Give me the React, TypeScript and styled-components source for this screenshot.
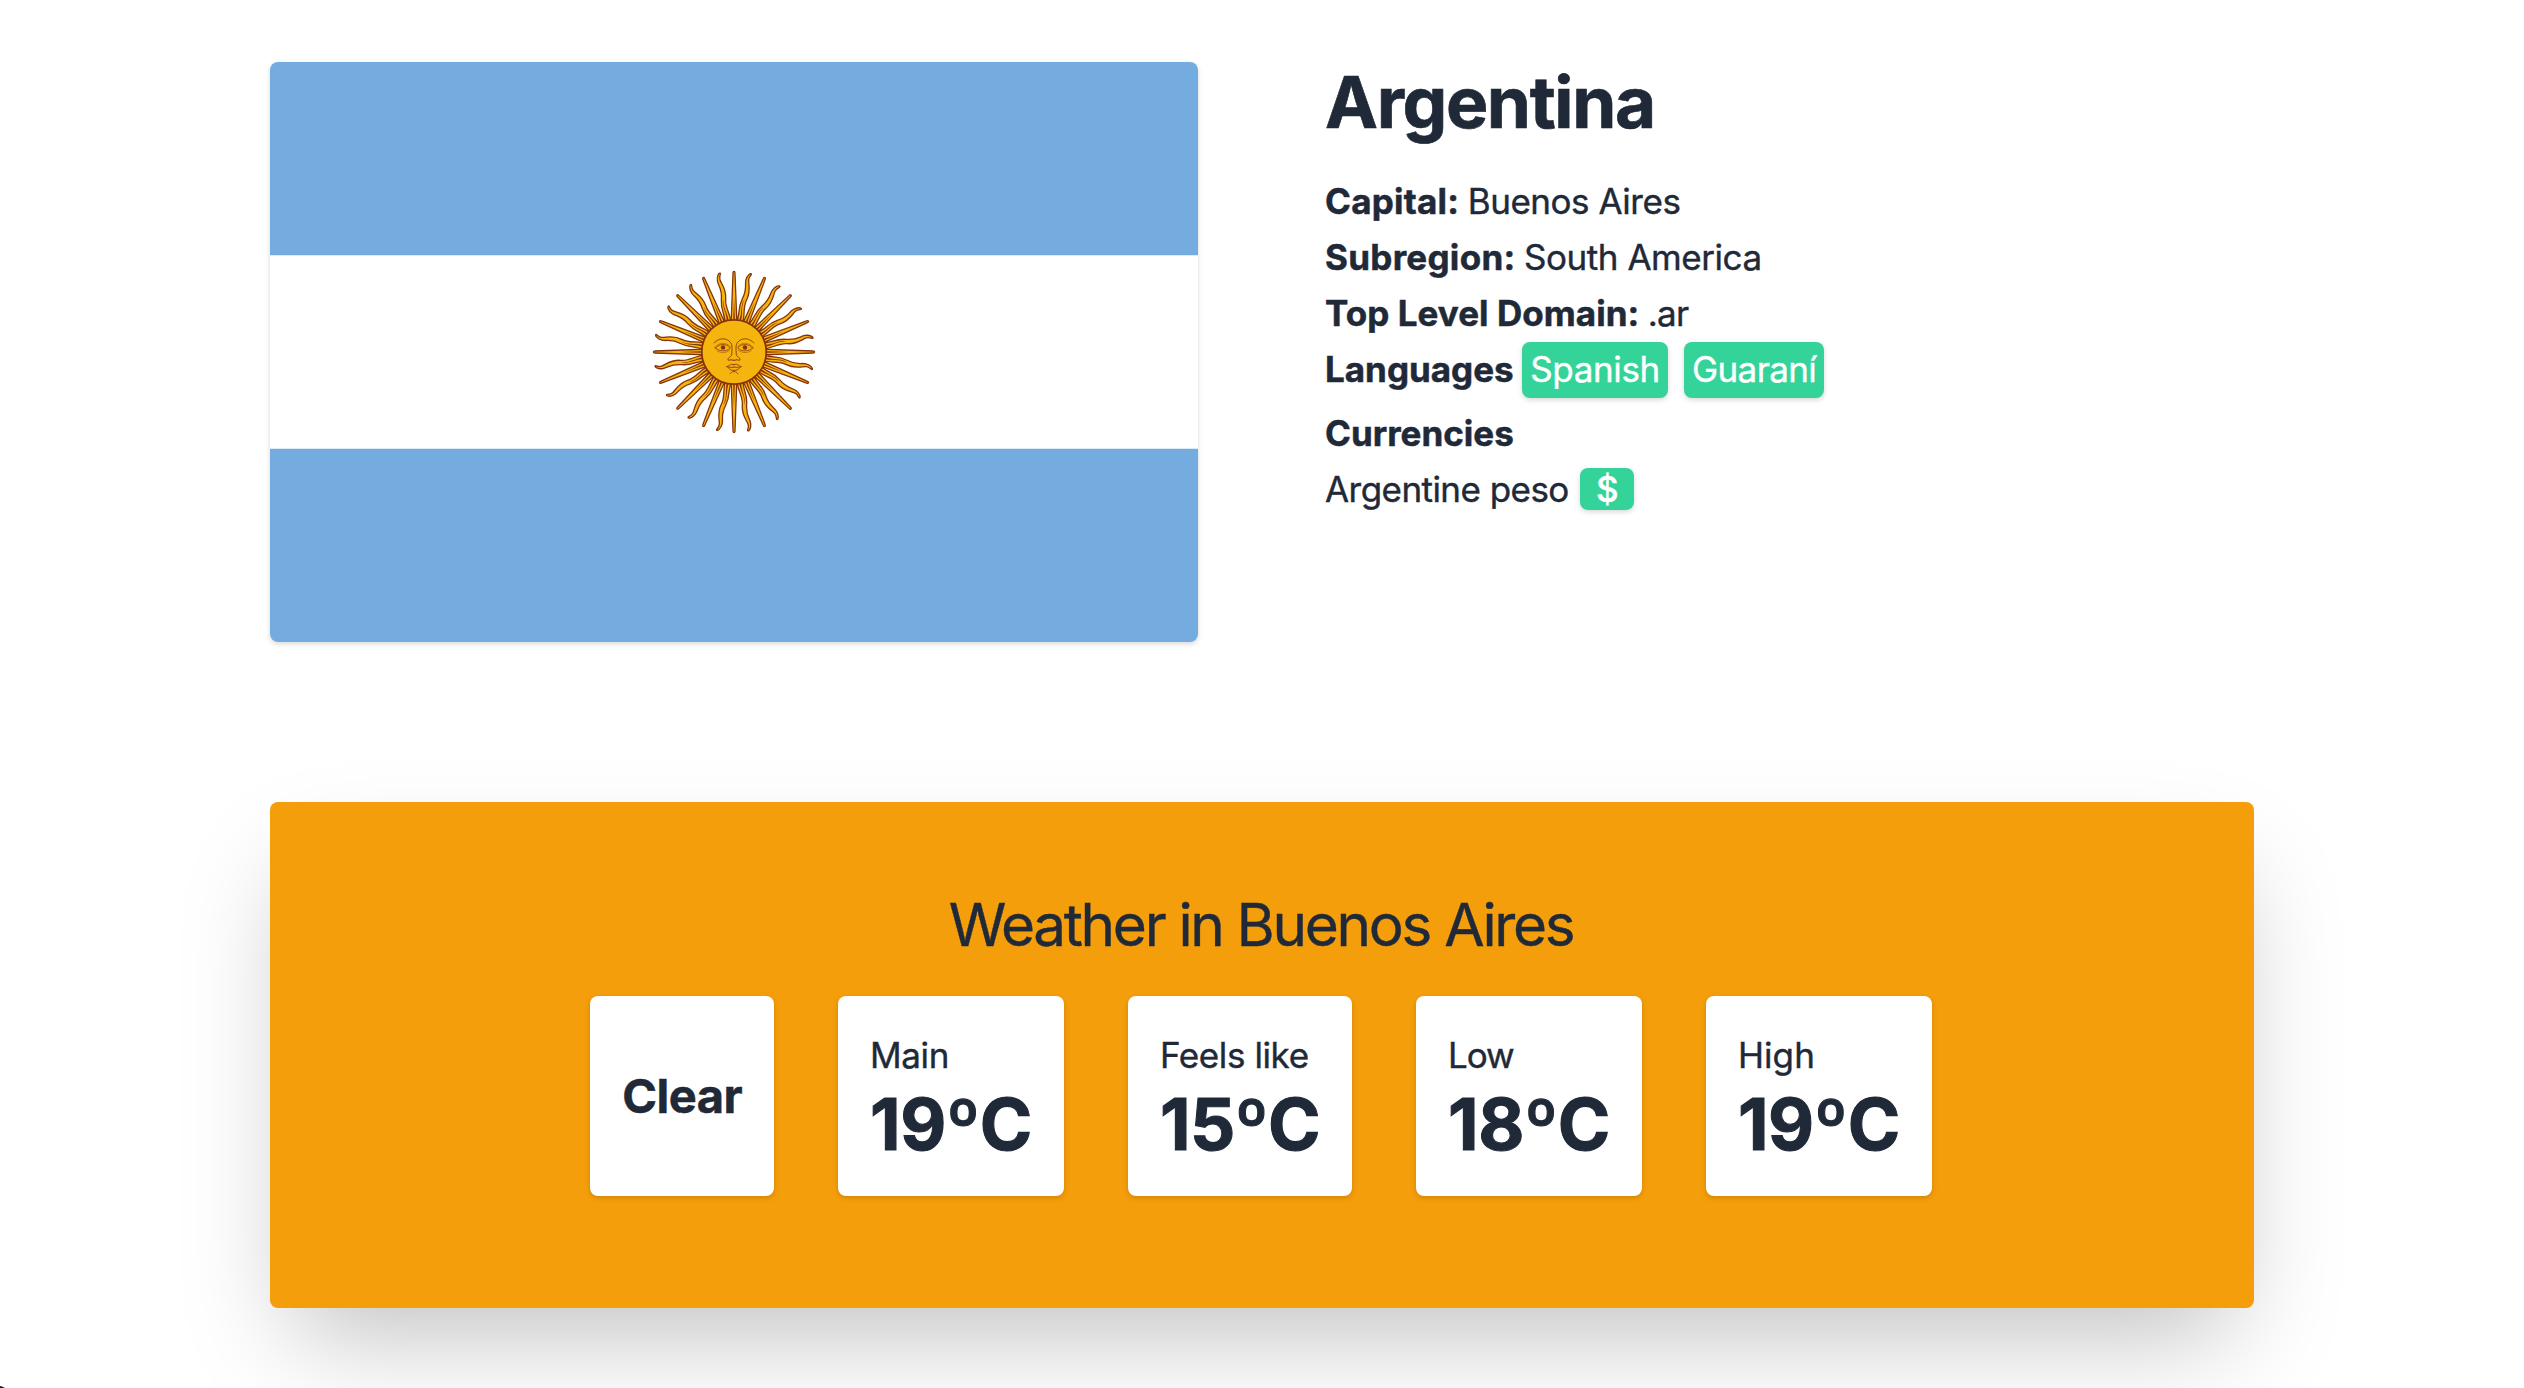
import React from 'react';
import styled, { createGlobalStyle } from 'styled-components';

const GlobalStyle = createGlobalStyle`
  *, *::before, *::after { box-sizing: border-box; }
  html, body { margin: 0; background: #fff; overflow: hidden; }
  body {
    font-family: Inter, "Liberation Sans", sans-serif;
    font-size: 35px;
    line-height: 56px;
    color: #1f2937;
    -webkit-font-smoothing: antialiased;
    -webkit-text-stroke: 0.4px currentColor;
  }
  h1, h2, p { margin: 0; }
`;

const cardShadow = '0 2px 6px rgba(0, 0, 0, 0.1), 0 2px 4px rgba(0, 0, 0, 0.06)';

const Page = styled.main`
  position: relative;
  height: 1388px;
  padding: 62px 270px 0;
  overflow: hidden;
`;

const Overview = styled.section`
  display: flex;
  align-items: flex-start;
  gap: 127px;
`;

const FlagFrame = styled.div`
  flex: none;
  width: 928px;
  height: 580px;
  border-radius: 8px;
  overflow: hidden;
  box-shadow: ${cardShadow};

  svg { display: block; width: 100%; height: 100%; }
`;

const Facts = styled.div`
  display: flex;
  flex-direction: column;
`;

const CountryName = styled.h1`
  margin-bottom: 32px;
  font-size: 71px;
  line-height: 80px;
  font-weight: 700;
  letter-spacing: -1.38px;
  -webkit-text-stroke-width: 0.7px;
`;

const Fact = styled.div<{ $gap?: number; $after?: number }>`
  display: flex;
  align-items: center;
  gap: ${p => p.$gap ?? 8.5}px;
  height: 56px;
  margin-bottom: ${p => p.$after ?? 0}px;
  white-space: nowrap;
`;

const Text = styled.span<{ $track?: number }>`
  padding-bottom: 2px;
  line-height: 54px;
  letter-spacing: ${p => p.$track ?? 0}px;
`;

const Label = styled(Text)`
  font-weight: 700;
  -webkit-text-stroke-width: 0.5px;
`;

const Tags = styled.div`
  display: flex;
  gap: 16px;
`;

const Tag = styled.span<{ $track: number }>`
  padding: 0 8px 2px;
  border-radius: 8px;
  background: #34d399;
  color: #fff;
  line-height: 54px;
  letter-spacing: ${p => p.$track}px;
  box-shadow: ${cardShadow};
`;

const Symbol = styled.span`
  width: 54px;
  height: 42px;
  margin-bottom: 2px;
  border-radius: 8px;
  background: #34d399;
  color: #fff;
  font-weight: 500;
  line-height: 42px;
  text-align: center;
  box-shadow: ${cardShadow};
`;

const Weather = styled.section`
  display: flex;
  flex-direction: column;
  align-items: center;
  height: 506px;
  margin-top: 160px;
  padding: 87px 2px 0 0;
  border-radius: 8px;
  background: #f59e0b;
  box-shadow: 0 50px 100px -24px rgba(0, 0, 0, 0.25);
`;

const WeatherTitle = styled.h2`
  margin-bottom: 35px;
  font-size: 58.5px;
  line-height: 72px;
  font-weight: 400;
  letter-spacing: -2.34px;
`;

const Readings = styled.div`
  display: flex;
  gap: 64px;
`;

const Reading = styled.div`
  display: flex;
  flex-direction: column;
  justify-content: center;
  height: 200px;
  padding: 0 32px;
  border-radius: 8px;
  background: #fff;
  box-shadow: ${cardShadow};
`;

const Condition = styled.p`
  font-size: 47px;
  line-height: 64px;
  font-weight: 700;
  letter-spacing: -0.5px;
  -webkit-text-stroke-width: 0.5px;
`;

const Degrees = styled.p<{ $track: number }>`
  font-size: 71px;
  line-height: 80px;
  font-weight: 700;
  letter-spacing: ${p => p.$track}px;
  -webkit-text-stroke-width: 1.1px;
`;

const WindowCorner = styled.div`
  position: absolute;
  left: 0;
  bottom: 0;
  width: 5px;
  height: 2px;
  background: #111c26;
  clip-path: polygon(0 0, 40% 30%, 100% 100%, 0 100%);
`;

const turns = Array.from({ length: 16 }, (_, i) => i * 22.5);

function HalfFace() {
  return (
    <g fill="none" stroke="#843511" strokeWidth="0.75" strokeLinecap="round">
      <path d="M382.8 242.2C386.6 238.2 391.6 237.6 395.2 240.1C397.8 241.9 398.5 244.4 398.3 247.4L398 252.4C397.6 253.8 396.4 254.2 395.6 255" />
      <path d="M384 246.6C386.8 242.8 393.6 242.2 396.8 246.6C393.2 250 387.8 249.8 384 246.6Z" strokeWidth="0.65" />
      <path d="M383.4 246.2C387 241.4 393.4 241.2 397 245.6" strokeWidth="0.4" />
      <path d="M385.2 248.8C388.2 251.2 393.2 251.2 396.2 248.4" strokeWidth="0.4" />
      <circle cx="390.54" cy="246.15" r="1.93" fill="#843511" stroke="none" />
      <path d="M400 257.2C398.8 257.6 397.8 256 396.4 257C395.2 257.8 394.4 256.7 395 255.6" strokeWidth="0.85" />
      <path d="M400 261C398.6 260.2 397.4 260.4 396.4 261.2C395.4 262.1 394.4 262.6 393.5 262.6C395.4 263.4 397.6 263.1 400 263.1" />
      <path d="M395 263.5C396.2 265.4 398 265.9 400 265.9" />
      <path d="M396.7 268.8C397.4 267.3 398.6 266.9 400 266.9" strokeWidth="0.65" />
    </g>
  );
}

function ArgentinaFlag() {
  return (
    <svg viewBox="0 0 800 500" role="img" aria-label="Argentina">
      <path fill="#74acdf" d="M0 0h800v500H0z" />
      <path fill="#fff" d="M0 166.67h800v166.67H0z" />
      {turns.map(a => (
        <g key={a} transform={`rotate(${a} 400 250)`}>
          <path
            fill="#f6b40e"
            stroke="#85340a"
            strokeWidth="1.1125"
            d="M396.84 251.31l28.454 61.992s.49 1.185 1.28.859c.79-.327.299-1.512.299-1.512l-23.715-63.956m-.68 24.12c-.347 9.428 5.452 14.613 4.694 23.032-.757 8.42 3.867 13.18 4.94 16.454 1.073 3.274-1.16 5.232-.198 5.698.963.466 3.07-2.121 2.383-6.776-.687-4.655-4.22-6.037-3.39-16.32.83-10.283-4.206-12.678-2.98-22.058"
          />
          <path
            fill="#85340a"
            d="M404.31 274.41c.453 9.054 5.587 13.063 4.579 21.314 2.213-6.525-3.124-11.583-2.82-21.22m-7.649-23.757l19.487 42.577-16.329-43.887"
          />
        </g>
      ))}
      <circle cx="400" cy="250" r="27.778" fill="#f6b40e" stroke="#85340a" strokeWidth="1.5" />
      <HalfFace />
      <g transform="matrix(-1 0 0 1 800 0)">
        <HalfFace />
      </g>
    </svg>
  );
}

const readings = [
  { label: 'Main', value: '19ºC', labelTrack: -0.4, track: -0.4 },
  { label: 'Feels like', value: '15ºC', labelTrack: -0.4, track: -0.7 },
  { label: 'Low', value: '18ºC', labelTrack: -1, track: -0.4 },
  { label: 'High', value: '19ºC', labelTrack: 0.1, track: -0.4 },
];

export default function App() {
  return (
    <Page>
      <GlobalStyle />
      <Overview>
        <FlagFrame><ArgentinaFlag /></FlagFrame>
        <Facts>
          <CountryName>Argentina</CountryName>
          <Fact><Label $track={0.25}>Capital:</Label><Text $track={-0.47}>Buenos Aires</Text></Fact>
          <Fact><Label $track={0.29}>Subregion:</Label><Text $track={-0.45}>South America</Text></Fact>
          <Fact><Label $track={0.05}>Top Level Domain:</Label><Text $track={-0.8}>.ar</Text></Fact>
          <Fact $after={8}>
            <Label>Languages</Label>
            <Tags>
              <Tag $track={-0.35}>Spanish</Tag>
              <Tag $track={-0.6}>Guaraní</Tag>
            </Tags>
          </Fact>
          <Fact><Label>Currencies</Label></Fact>
          <Fact $gap={11.5}><Text $track={-0.55}>Argentine peso</Text><Symbol>$</Symbol></Fact>
        </Facts>
      </Overview>
      <Weather>
        <WeatherTitle>Weather in Buenos Aires</WeatherTitle>
        <Readings>
          <Reading><Condition>Clear</Condition></Reading>
          {readings.map(r => (
            <Reading key={r.label}>
              <Text as="p" $track={r.labelTrack}>{r.label}</Text>
              <Degrees $track={r.track}>{r.value}</Degrees>
            </Reading>
          ))}
        </Readings>
      </Weather>
      <WindowCorner />
    </Page>
  );
}
